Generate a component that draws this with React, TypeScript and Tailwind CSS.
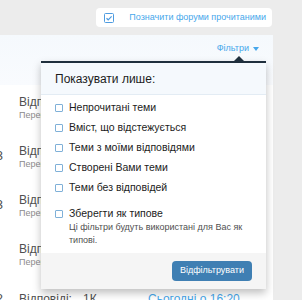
import React from 'react';

const Box = () => (
    <span className="inline-block w-[8px] h-[8px] border border-[#7fb0d8] rounded-[1px] bg-white shrink-0" />
);

export default function App() {
    const filters = [
        "Непрочитані теми",
        "Вміст, що відстежується",
        "Теми з моїми відповідями",
        "Створені Вами теми",
        "Теми без відповідей",
    ];

    const rows = ["", "3", "3", ""];

    return (
        <div className="relative w-[302px] h-[300px] overflow-hidden bg-[#ececec] font-['Liberation_Sans',Arial,sans-serif] text-[#141414]">
            {/* top action */}
            <div className="flex justify-end pt-[8px] pr-[30px]">
                <div className="flex items-center h-[19px] bg-white rounded-[4px] pl-[8px] pr-[6px] gap-[15px]">
                    <svg width="10" height="10" viewBox="0 0 10 10" fill="none">
                        <rect x="0.5" y="0.5" width="9" height="9" rx="1" stroke="#4d9be0" />
                        <path d="M2.5 5.2L4.2 6.8L7.6 3.3" stroke="#4d9be0" strokeWidth="1.2" />
                    </svg>
                    <span className="text-[9px] text-[#47a7eb]">Позначити форуми прочитаними</span>
                </div>
            </div>

            {/* main block */}
            <div className="mt-[8px] mr-[29px] bg-white rounded-tr-[4px]">
                <div className="h-[50px] bg-gradient-to-b from-[#f5f9fd] to-[#f9fbfe] flex justify-end pr-[14px] pt-[8px]">
                    <span className="text-[9px] text-[#47a7eb] flex items-center gap-[4px] h-[12px]">
                        Фільтри
                        <svg width="6" height="4" viewBox="0 0 6 4"><path d="M0 0H6L3 4Z" fill="#47a7eb" /></svg>
                    </span>
                </div>
                <div className="flex flex-col">
                    {rows.map((n, i) => (
                        <div key={i} className="flex h-[49px] pt-[10px]">
                            <div className="w-[25px] -ml-[6px] pr-[16px] text-right pt-[5px] text-[13px] text-[#505050] leading-[14px]">{n}</div>
                            <div className="flex flex-col">
                                <span className="text-[12px] leading-[14px] text-[#505050]">Відповіді: 12</span>
                                <span className="text-[9px] leading-[13px] text-[#8c8c8c]">Перегляди: 2K</span>
                            </div>
                        </div>
                    ))}
                    <div className="flex pt-[11px]">
                        <div className="w-[25px] -ml-[6px] pr-[16px] text-right text-[13px] text-[#505050] leading-[14px]">2</div>
                        <div className="flex text-[12px] leading-[14px] text-[#505050]">
                            <span className="w-[64px]">Відповіді:</span>
                            <span className="w-[65px]">1К</span>
                            <span className="text-[#47a7eb]">Сьогодні о 16:20</span>
                        </div>
                    </div>
                </div>
            </div>

            {/* filter menu */}
            <div className="absolute left-[41px] top-[56px] w-[225px]">
                <div className="flex justify-end pr-[21px] h-[5px]">
                    <svg width="12" height="6" viewBox="0 0 12 6" className="-mb-[1px]"><path d="M0 6L6 0L12 6Z" fill="#1f2f3d" /></svg>
                </div>
                <div className="bg-white border-t-[2px] border-[#1f2f3d] shadow-[0_4px_8px_rgba(0,0,0,0.25)]">
                    <div className="h-[32px] bg-[#f5f9fd] border-b border-[#e3ecf4] flex items-center pl-[14px] text-[12px] text-[#1c1c1c]">
                        Показувати лише:
                    </div>
                    <div className="flex flex-col gap-[6px] pt-[6px] pl-[14px] text-[10.5px] text-[#1c1c1c]">
                        {filters.map((f) => (
                            <label key={f} className="flex items-center gap-[6px] h-[14px]">
                                <Box />
                                <span>{f}</span>
                            </label>
                        ))}
                    </div>
                    <div className="pt-[12px] pl-[14px] pb-[6px] text-[10.5px]">
                        <div className="flex items-center gap-[6px] h-[14px] text-[#1c1c1c]">
                            <Box />
                            <span>Зберегти як типове</span>
                        </div>
                        <div className="pl-[14px] leading-[13px] text-[9px] text-[#505050]">
                            Ці фільтри будуть використані для Вас як типові.
                        </div>
                    </div>
                    <div className="bg-[#f5f5f5] h-[36px] flex items-center justify-end pr-[14px]">
                        <button className="h-[20px] px-[8px] bg-[#3f7fb3] rounded-[4px] text-white text-[9px]">
                            Відфільтрувати
                        </button>
                    </div>
                </div>
            </div>
        </div>
    );
}
